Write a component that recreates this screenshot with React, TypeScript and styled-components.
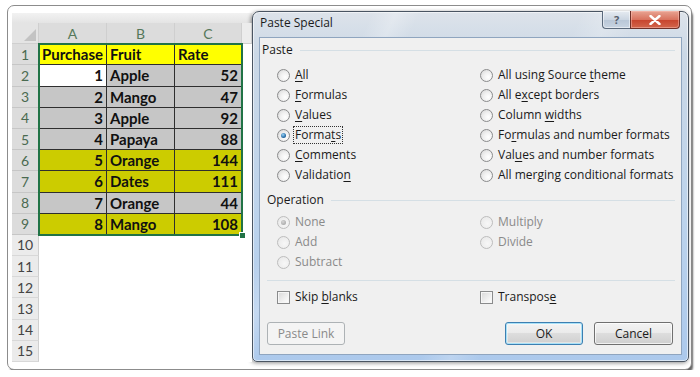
import React from "react"
import styled, { createGlobalStyle, css } from "styled-components"

type Opt = { label: string; key?: number; checked?: boolean; focus?: boolean }

const pasteRows: [Opt, Opt][] = [
  [{ label: "All", key: 0 }, { label: "All using Source theme", key: 17 }],
  [{ label: "Formulas", key: 0 }, { label: "All except borders", key: 5 }],
  [{ label: "Values", key: 0 }, { label: "Column widths", key: 7 }],
  [
    { label: "Formats", key: 5, checked: true, focus: true },
    { label: "Formulas and number formats", key: 2 },
  ],
  [{ label: "Comments", key: 0 }, { label: "Values and number formats", key: 3 }],
  [{ label: "Validation", key: 9 }, { label: "All merging conditional formats", key: 7 }],
]

const operationRows: [Opt, Opt | null][] = [
  [{ label: "None", checked: true }, { label: "Multiply" }],
  [{ label: "Add" }, { label: "Divide" }],
  [{ label: "Subtract" }, null],
]

type Fill = "white" | "gray" | "olive"
const data: { n: number; fruit: string; rate: number; fill: Fill }[] = [
  { n: 1, fruit: "Apple", rate: 52, fill: "gray" },
  { n: 2, fruit: "Mango", rate: 47, fill: "gray" },
  { n: 3, fruit: "Apple", rate: 92, fill: "gray" },
  { n: 4, fruit: "Papaya", rate: 88, fill: "gray" },
  { n: 5, fruit: "Orange", rate: 144, fill: "olive" },
  { n: 6, fruit: "Dates", rate: 111, fill: "olive" },
  { n: 7, fruit: "Orange", rate: 44, fill: "gray" },
  { n: 8, fruit: "Mango", rate: 108, fill: "olive" },
]

const fills = { white: "#ffffff", gray: "#c6c6c6", olive: "#cccc00", yellow: "#ffff00" }

const ROW_H = 21.2

const Accel = ({ text, at }: { text: string; at?: number }) => {
  if (at === undefined) return <>{text}</>
  return (
    <>
      {text.slice(0, at)}
      <Key>{text[at]}</Key>
      {text.slice(at + 1)}
    </>
  )
}

const Option = ({ opt, disabled }: { opt: Opt; disabled?: boolean }) => (
  <OptionRow>
    <Radio $checked={!!opt.checked} $disabled={!!disabled} />
    <OptionText $disabled={!!disabled} $focus={!!opt.focus}>
      <Accel text={opt.label} at={opt.key} />
    </OptionText>
  </OptionRow>
)

const Check = ({ text, at }: { text: string; at: number }) => (
  <OptionRow>
    <Box />
    <OptionText $disabled={false} $focus={false}>
      <Accel text={text} at={at} />
    </OptionText>
  </OptionRow>
)

const App = () => {
  const rowNumbers = Array.from({ length: 15 }, (_, i) => i + 1)
  return (
    <Page>
      <GlobalStyle />
      <Card>
        <Sheet>
          <TopBand />
          <Grid>
            <Corner />
            {["A", "B", "C"].map(c => (
              <ColHead key={c}>{c}</ColHead>
            ))}
            <ColHead $plain />
            {rowNumbers.map(r => {
              const d = data[r - 2]
              return (
                <React.Fragment key={r}>
                  <RowHead $active={r <= 9}>{r}</RowHead>
                  {r === 1 && (
                    <>
                      <Cell $fill="yellow">Purchase</Cell>
                      <Cell $fill="yellow">Fruit</Cell>
                      <Cell $fill="yellow">Rate</Cell>
                    </>
                  )}
                  {d && (
                    <>
                      <Cell $fill={r === 2 ? "white" : d.fill} $right>
                        {d.n}
                      </Cell>
                      <Cell $fill={d.fill}>{d.fruit}</Cell>
                      <Cell $fill={d.fill} $right>
                        {d.rate}
                      </Cell>
                    </>
                  )}
                  {r > 9 && (
                    <>
                      <Empty />
                      <Empty />
                      <Empty />
                    </>
                  )}
                  <Empty />
                </React.Fragment>
              )
            })}
            <Selection>
              <Handle />
            </Selection>
          </Grid>
        </Sheet>

        <Dialog>
          <TitleBar>
            <Title>Paste Special</Title>
            <Caption>
              <HelpBtn>?</HelpBtn>
              <CloseBtn>
                <svg width="12" height="10" viewBox="0 0 12 10">
                  <path
                    d="M1.5 1 L10.5 9 M10.5 1 L1.5 9"
                    stroke="#fff"
                    strokeWidth="2.4"
                    strokeLinecap="round"
                  />
                </svg>
              </CloseBtn>
            </Caption>
          </TitleBar>
          <Client>
            <GroupHead $indent={2}>
              Paste
              <Rule />
            </GroupHead>
            <Options $top={7}>
              {pasteRows.map(([l, r]) => (
                <React.Fragment key={l.label}>
                  <Option opt={l} />
                  <Option opt={r} />
                </React.Fragment>
              ))}
            </Options>
            <GroupHead $indent={7} $top={7}>
              Operation
              <Rule />
            </GroupHead>
            <Options $top={4}>
              {operationRows.map(([l, r]) => (
                <React.Fragment key={l.label}>
                  <Option opt={l} disabled />
                  {r ? <Option opt={r} disabled /> : <span />}
                </React.Fragment>
              ))}
            </Options>
            <Separator />
            <Options $top={6}>
              <Check text="Skip blanks" at={5} />
              <Check text="Transpose" at={8} />
            </Options>
            <Buttons>
              <Button $disabled $width={78}>
                Paste Link
              </Button>
              <Spacer />
              <Button $default $width={78}>
                OK
              </Button>
              <Button $width={79}>Cancel</Button>
            </Buttons>
          </Client>
        </Dialog>
      </Card>
    </Page>
  )
}

const GlobalStyle = createGlobalStyle`
  html, body {
    margin: 0;
    padding: 0;
    background: #ffffff;
    overflow: hidden;
  }
  body {
    font-family: "Open Sans", "Noto Sans", sans-serif;
  }
`

const Page = styled.div`
  padding: 5px 0 0 7px;
`

const Card = styled.div`
  box-sizing: border-box;
  width: 685px;
  height: 365px;
  display: flex;
  align-items: flex-start;
  padding: 7px 2px 0 4px;
  background: #fff;
  border: 1px solid #8c8c8c;
  border-radius: 7px;
  box-shadow: 2px 4px 2px -1px rgba(0, 0, 0, 0.6);
`

const Sheet = styled.div`
  width: 240px;
  flex: none;
  display: flex;
  flex-direction: column;
  font-family: Lato, "Liberation Sans", sans-serif;
`

const TopBand = styled.div`
  height: 10px;
  background: linear-gradient(#f2f2f2, #e4e4e4);
`

const Grid = styled.div`
  position: relative;
  display: grid;
  grid-template-columns: 27px 68px 68px 67px 10px;
  grid-auto-rows: ${ROW_H}px;
`

const headBase = css`
  box-sizing: border-box;
  display: flex;
  align-items: center;
  justify-content: center;
  font-size: 14px;
  background: #e4e4e4;
  border-right: 1px solid #cfcfcf;
  border-bottom: 1px solid #cfcfcf;
`

const Corner = styled.div`
  ${headBase};
  position: relative;
  &::after {
    content: "";
    position: absolute;
    right: 2px;
    bottom: 2px;
    border-left: 12px solid transparent;
    border-bottom: 12px solid #c3c3c3;
  }
`

const ColHead = styled.div<{ $plain?: boolean }>`
  ${headBase};
  color: #55785a;
  background: ${p => (p.$plain ? "#ececec" : "#dcdcdc")};
  border-bottom: 1px solid ${p => (p.$plain ? "#cfcfcf" : "#6f9a78")};
`

const RowHead = styled.div<{ $active: boolean }>`
  ${headBase};
  color: ${p => (p.$active ? "#4a6a50" : "#444")};
  background: ${p => (p.$active ? "#dcdcdc" : "#ebebeb")};
  border-bottom-color: ${p => (p.$active ? "#c6c6c6" : "#d8d8d8")};
`

const Cell = styled.div<{ $fill: keyof typeof fills; $right?: boolean }>`
  box-sizing: border-box;
  display: flex;
  align-items: center;
  justify-content: ${p => (p.$right ? "flex-end" : "flex-start")};
  padding: 0 3px;
  font-size: 15px;
  font-weight: 700;
  color: #111;
  background: ${p => fills[p.$fill]};
  border-right: 1px solid #2e2e2e;
  border-bottom: 1px solid #2e2e2e;
`

const Empty = styled.div`
  background: #fff;
`

/* selection outline drawn over A1:C9 */
const Selection = styled.div`
  position: absolute;
  left: 26px;
  top: ${ROW_H - 1}px;
  width: 205px;
  height: ${ROW_H * 9 + 2}px;
  box-sizing: border-box;
  border: 2px solid #217346;
  pointer-events: none;
`

const Handle = styled.span`
  position: absolute;
  right: -5px;
  bottom: -5px;
  width: 5px;
  height: 5px;
  background: #217346;
  border: 1px solid #fff;
`

const Dialog = styled.div`
  box-sizing: border-box;
  width: 437px;
  height: 351px;
  flex: none;
  margin-top: -2px;
  display: flex;
  flex-direction: column;
  padding: 0 6px 6px 6px;
  border: 1px solid #4a5562;
  border-radius: 7px 7px 5px 5px;
  background: linear-gradient(
      115deg,
      rgba(255, 255, 255, 0) 20%,
      rgba(255, 255, 255, 0.25) 24%,
      rgba(255, 255, 255, 0) 28%,
      rgba(255, 255, 255, 0) 55%,
      rgba(255, 255, 255, 0.2) 60%,
      rgba(255, 255, 255, 0) 65%
    ),
    linear-gradient(#dde3ea, #cbd8e6 12%, #bcd3ec 60%, #acc9ec);
  box-shadow: -1px 1px 4px rgba(0, 0, 0, 0.45), inset 0 0 0 1px rgba(255, 255, 255, 0.55);
`

const TitleBar = styled.div`
  height: 25px;
  display: flex;
  align-items: flex-start;
`

const Title = styled.div`
  margin-top: 3px;
  padding-left: 1px;
  font-size: 12px;
  line-height: 16px;
  color: #1b1b1b;
`

const Caption = styled.div`
  margin-left: auto;
  margin-right: 2px;
  margin-top: -1px;
  display: flex;
`

const captionBtn = css`
  box-sizing: border-box;
  height: 18px;
  display: flex;
  align-items: center;
  justify-content: center;
  border: 1px solid #5b6a7c;
  border-top: none;
`

const HelpBtn = styled.div`
  ${captionBtn};
  width: 28px;
  border-radius: 0 0 0 4px;
  border-right: none;
  background: linear-gradient(#e6ebf1, #ccd6e2 50%, #b8c6d6 51%, #c8d4e2);
  color: #56606c;
  font-size: 11px;
  font-weight: 700;
  box-shadow: inset 0 0 0 1px rgba(255, 255, 255, 0.5);
`

const CloseBtn = styled.div`
  ${captionBtn};
  width: 50px;
  border-color: #6f3028;
  border-radius: 0 0 4px 0;
  background: linear-gradient(#e8a493, #d9735f 50%, #c7432c 51%, #d2664c);
  box-shadow: inset 0 0 0 1px rgba(255, 200, 190, 0.45);
`

const Client = styled.div`
  flex: 1;
  box-sizing: border-box;
  display: flex;
  flex-direction: column;
  padding: 4px 6px 0 0;
  background: #f0f0f0;
  border: 1px solid #8fa5bf;
  font-size: 12px;
  color: #1a1a1a;
`

const GroupHead = styled.div<{ $indent: number; $top?: number }>`
  display: flex;
  align-items: center;
  gap: 7px;
  height: 16px;
  line-height: 16px;
  margin-top: ${p => p.$top ?? 0}px;
  padding-left: ${p => p.$indent}px;
`

const Rule = styled.span`
  flex: 1;
  height: 1px;
  background: #d5dfe5;
`

const Separator = styled.div`
  height: 1px;
  margin: 8px 0 0 7px;
  background: #d5dfe5;
`

const Options = styled.div<{ $top: number }>`
  display: grid;
  grid-template-columns: 203px 1fr;
  grid-auto-rows: 20px;
  align-items: center;
  margin-top: ${p => p.$top}px;
  padding-left: 17px;
`

const OptionRow = styled.div`
  display: flex;
  align-items: center;
  gap: 4px;
  white-space: nowrap;
`

const Radio = styled.span<{ $checked: boolean; $disabled: boolean }>`
  box-sizing: border-box;
  width: 13px;
  height: 13px;
  flex: none;
  border-radius: 50%;
  display: flex;
  align-items: center;
  justify-content: center;
  border: 1px solid ${p => (p.$disabled ? "#bdbdbd" : "#8a8b8c")};
  background: ${p =>
    p.$disabled
      ? "radial-gradient(circle at 60% 60%, #f7f7f7, #e6e6e6)"
      : "radial-gradient(circle at 65% 65%, #ffffff, #f0f0f0 45%, #d4d4d4)"};
  &::after {
    content: "";
    display: ${p => (p.$checked ? "block" : "none")};
    width: 5px;
    height: 5px;
    border-radius: 50%;
    background: ${p =>
      p.$disabled
        ? "radial-gradient(circle at 40% 35%, #d6d6d6, #9a9a9a)"
        : "radial-gradient(circle at 40% 35%, #9ad4f8, #2a6fa8 60%, #173f6a)"};
  }
`

const Box = styled.span`
  box-sizing: border-box;
  width: 13px;
  height: 13px;
  flex: none;
  border: 1px solid #8a8b8c;
  background: linear-gradient(135deg, #d8d8d8, #f4f4f4 70%, #ffffff);
  box-shadow: inset 0 0 0 1px #f6f6f6;
`

const OptionText = styled.span<{ $disabled: boolean; $focus: boolean }>`
  line-height: 16px;
  padding: 0 1px;
  color: ${p => (p.$disabled ? "#8a8a8a" : "#1a1a1a")};
  outline: ${p => (p.$focus ? "1px dotted #333" : "none")};
`

const Key = styled.span`
  text-decoration: underline;
  text-underline-offset: 2px;
`

const Buttons = styled.div`
  display: flex;
  align-items: center;
  gap: 11px;
  margin-top: 15px;
  padding: 0 2px 0 7px;
`

const Spacer = styled.span`
  flex: 1;
`

const Button = styled.div<{ $width: number; $disabled?: boolean; $default?: boolean }>`
  box-sizing: border-box;
  width: ${p => p.$width}px;
  height: 23px;
  display: flex;
  align-items: center;
  justify-content: center;
  border-radius: 3px;
  font-size: 12px;
  border: 1px solid #707070;
  color: #1a1a1a;
  background: linear-gradient(#f3f3f3, #ebebeb 45%, #dddddd 50%, #cfcfcf);
  box-shadow: inset 0 0 0 1px rgba(255, 255, 255, 0.7);
  ${p =>
    p.$default &&
    css`
      border-color: #3c7fb1;
      box-shadow: inset 0 0 0 1px #a8e1f8, inset 0 0 0 2px rgba(255, 255, 255, 0.4);
    `}
  ${p =>
    p.$disabled &&
    css`
      border-color: #adb2b5;
      color: #8a8a8a;
      background: #f4f4f4;
      box-shadow: none;
    `}
`

export default App
